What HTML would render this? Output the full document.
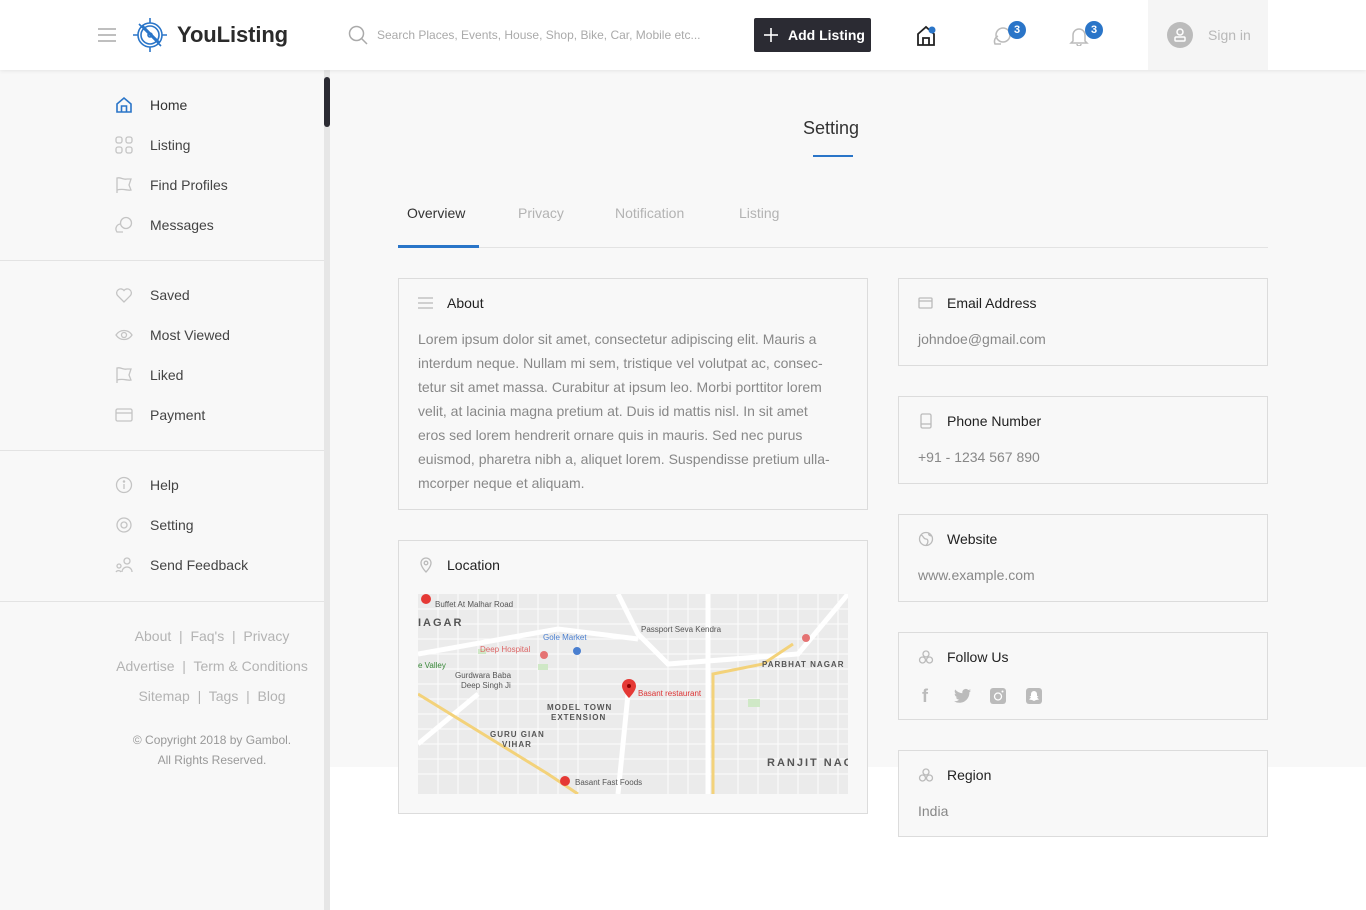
<!DOCTYPE html>
<html><head><meta charset="utf-8">
<style>
*{margin:0;padding:0;box-sizing:border-box}
body{width:1366px;height:910px;position:relative;overflow:hidden;background:#fff;font-family:"Liberation Sans",sans-serif;color:#333}
.a{position:absolute}
#hdr{left:0;top:0;width:1366px;height:70px;background:#fff;box-shadow:0 1px 4px rgba(0,0,0,.08);z-index:5}
#side{left:0;top:70px;width:324px;height:840px;background:#f8f8f8}
#track{left:324px;top:70px;width:6px;height:840px;background:#e6e6e6}
#thumb{left:324px;top:77px;width:6px;height:50px;background:#2b2b33;border-radius:3px}
#main{left:330px;top:70px;width:1036px;height:697px;background:#f8f8f8}
.nav{left:115px;font-size:14px;color:#333;display:flex;align-items:center}
.nav svg{width:18px;height:18px;margin-right:17px}
.sep{left:0;width:324px;height:1px;background:#e3e3e3}
.ft{left:100px;width:224px;text-align:center;font-size:14px;color:#b3b3b3}
.card{border:1px solid #dcdcdc;background:#f8f8f8}
.ct{font-size:14px;color:#222;display:flex;align-items:center}
.ct svg{width:16px;height:16px;margin-right:13px}
.cv{font-size:14px;color:#888}
.tab{top:205px;font-size:14px;color:#b3b3b3}
</style></head><body>
<div id="hdr" class="a">
  <svg class="a" style="left:98px;top:27px" width="18" height="16"><g stroke="#aaa" stroke-width="1.6"><line x1="0" y1="2" x2="18" y2="2"/><line x1="0" y1="8" x2="18" y2="8"/><line x1="0" y1="14" x2="18" y2="14"/></g></svg>
  <svg class="a" style="left:131px;top:16px" width="38" height="38" viewBox="0 0 38 38" fill="none" stroke="#2a75c8" stroke-width="1.6"><circle cx="19" cy="19" r="12"/><circle cx="19" cy="19" r="9"/><path d="M19 2v5M19 31v5M2 19h5M31 19h5"/><path d="M8 8l22 22M12 10l7 7 2 2 7 7-7-5-5-5z"/><circle cx="19" cy="19" r="2"/></svg>
  <div class="a" style="left:177px;top:22px;font-size:22px;font-weight:bold;color:#2b2b2b;letter-spacing:-.1px">YouListing</div>
  <svg class="a" style="left:348px;top:25px" width="20" height="20" fill="none" stroke="#aaa" stroke-width="1.5"><circle cx="8.5" cy="8.5" r="7"/><line x1="13.5" y1="13.5" x2="19" y2="19"/></svg>
  <div class="a" style="left:377px;top:28px;font-size:12px;color:#aaa">Search Places, Events, House, Shop, Bike, Car, Mobile etc...</div>
  <div class="a" style="left:754px;top:18px;width:117px;height:34px;background:#2b2b33;border-radius:2px;color:#fff;font-size:14px;font-weight:bold;line-height:34px;padding-left:34px">Add Listing</div>
  <svg class="a" style="left:763px;top:27px" width="16" height="16" stroke="#fff" stroke-width="1.6"><line x1="8" y1="1" x2="8" y2="15"/><line x1="1" y1="8" x2="15" y2="8"/></svg>
  <svg class="a" style="left:916px;top:25px" width="22" height="22" fill="none" stroke="#222" stroke-width="1.8"><path d="M2 9L10 2l8 7v11H2z"/><path d="M7 20v-7h6v7"/><circle cx="16" cy="5" r="3.5" fill="#2a75c8" stroke="none"/></svg>
  <svg class="a" style="left:992px;top:26px" width="22" height="20" fill="none" stroke="#bbb" stroke-width="1.5"><circle cx="11" cy="9" r="7"/><path d="M6 10a6 6 0 0 0-3 8h6"/></svg>
  <div class="a" style="left:1008px;top:21px;width:18px;height:18px;border-radius:9px;background:#2a75c8;color:#fff;font-size:11px;font-weight:bold;text-align:center;line-height:18px">3</div>
  <svg class="a" style="left:1069px;top:26px" width="20" height="20" fill="none" stroke="#bbb" stroke-width="1.5"><path d="M4 15V9a6 6 0 0 1 12 0v6l2 2H2z"/><path d="M8 18a2 2 0 0 0 4 0"/></svg>
  <div class="a" style="left:1085px;top:21px;width:18px;height:18px;border-radius:9px;background:#2a75c8;color:#fff;font-size:11px;font-weight:bold;text-align:center;line-height:18px">3</div>
  <div class="a" style="left:1148px;top:0;width:120px;height:70px;background:#f5f5f5"></div>
  <div class="a" style="left:1167px;top:22px;width:26px;height:26px;border-radius:13px;background:#bbb"></div>
  <svg class="a" style="left:1172px;top:27px" width="16" height="16" fill="none" stroke="#fff" stroke-width="1.5"><circle cx="8" cy="5" r="3"/><rect x="3" y="10" width="10" height="4" rx="1"/></svg>
  <div class="a" style="left:1208px;top:27px;font-size:14px;color:#b8b8b8">Sign in</div>
</div>

<div id="side" class="a"></div>
<div id="track" class="a"></div>
<div id="thumb" class="a"></div>
<div id="main" class="a"></div>

<div class="a nav" style="top:96px"><svg viewBox="0 0 18 18" fill="none" stroke="#2a75c8" stroke-width="1.6"><path d="M2 8l7-6 7 6v8H2z"/><path d="M6.5 16v-6h5v6"/></svg>Home</div>
<div class="a nav" style="top:136px;color:#444"><svg viewBox="0 0 18 18" fill="none" stroke="#c4c4c4" stroke-width="1.3"><rect x="1" y="1" width="6" height="6" rx="2"/><rect x="11" y="1" width="6" height="6" rx="2"/><rect x="1" y="11" width="6" height="6" rx="2"/><rect x="11" y="11" width="6" height="6" rx="2"/></svg>Listing</div>
<div class="a nav" style="top:176px;color:#444"><svg viewBox="0 0 18 18" fill="none" stroke="#c4c4c4" stroke-width="1.3"><path d="M2 17V2c4-1 6 2 10 1l4 0-2 6 2 5c-4 1-7-2-14 0"/></svg>Find Profiles</div>
<div class="a nav" style="top:216px;color:#444"><svg viewBox="0 0 18 18" fill="none" stroke="#c4c4c4" stroke-width="1.3"><circle cx="11" cy="7" r="5.5"/><path d="M5 8a5 5 0 0 0-3 8h6"/></svg>Messages</div>
<div class="a sep" style="top:260px"></div>
<div class="a nav" style="top:286px;color:#444"><svg viewBox="0 0 18 18" fill="none" stroke="#c4c4c4" stroke-width="1.3"><path d="M9 16L2.5 9.5a4 4 0 0 1 6.5-5 4 4 0 0 1 6.5 5z"/></svg>Saved</div>
<div class="a nav" style="top:326px;color:#444"><svg viewBox="0 0 18 18" fill="none" stroke="#c4c4c4" stroke-width="1.3"><path d="M1 9c4-6 12-6 16 0-4 6-12 6-16 0z"/><circle cx="9" cy="9" r="2.5"/></svg>Most Viewed</div>
<div class="a nav" style="top:366px;color:#444"><svg viewBox="0 0 18 18" fill="none" stroke="#c4c4c4" stroke-width="1.3"><path d="M2 17V2c4-1 6 2 10 1l4 0-2 6 2 5c-4 1-7-2-14 0"/></svg>Liked</div>
<div class="a nav" style="top:406px;color:#444"><svg viewBox="0 0 18 18" fill="none" stroke="#c4c4c4" stroke-width="1.3"><rect x="1" y="3" width="16" height="12" rx="1.5"/><line x1="1" y1="7" x2="17" y2="7"/></svg>Payment</div>
<div class="a sep" style="top:450px"></div>
<div class="a nav" style="top:476px;color:#444"><svg viewBox="0 0 18 18" fill="none" stroke="#c4c4c4" stroke-width="1.3"><circle cx="9" cy="9" r="7.5"/><line x1="9" y1="8" x2="9" y2="13"/><circle cx="9" cy="5.5" r=".6"/></svg>Help</div>
<div class="a nav" style="top:516px;color:#444"><svg viewBox="0 0 18 18" fill="none" stroke="#c4c4c4" stroke-width="1.3"><circle cx="9" cy="9" r="7"/><circle cx="9" cy="9" r="3"/></svg>Setting</div>
<div class="a nav" style="top:556px;color:#444"><svg viewBox="0 0 18 18" fill="none" stroke="#c4c4c4" stroke-width="1.3"><circle cx="12" cy="5" r="3"/><path d="M7 16a5 5 0 0 1 10 0"/><circle cx="4" cy="10" r="2"/><path d="M1 16a3 3 0 0 1 5 0"/></svg>Send Feedback</div>
<div class="a sep" style="top:601px"></div>
<div class="a ft" style="top:628px">About &nbsp;|&nbsp; Faq's &nbsp;|&nbsp; Privacy</div>
<div class="a ft" style="top:658px">Advertise &nbsp;|&nbsp; Term &amp; Conditions</div>
<div class="a ft" style="top:688px">Sitemap &nbsp;|&nbsp; Tags &nbsp;|&nbsp; Blog</div>
<div class="a ft" style="top:733px;font-size:12px;color:#999">© Copyright 2018 by Gambol.</div>
<div class="a ft" style="top:753px;font-size:12px;color:#999">All Rights Reserved.</div>

<div class="a" style="left:803px;top:118px;font-size:18px;color:#333">Setting</div>
<div class="a" style="left:813px;top:155px;width:40px;height:2px;background:#2a75c8"></div>
<div class="a tab" style="left:407px;color:#333">Overview</div>
<div class="a tab" style="left:518px">Privacy</div>
<div class="a tab" style="left:615px">Notification</div>
<div class="a tab" style="left:739px">Listing</div>
<div class="a" style="left:398px;top:247px;width:870px;height:1px;background:#e3e3e3"></div>
<div class="a" style="left:398px;top:245px;width:81px;height:3px;background:#2a75c8"></div>

<div class="a card" style="left:398px;top:278px;width:470px;height:232px"></div>
<div class="a ct" style="left:418px;top:295px"><svg viewBox="0 0 16 16" stroke="#bbb" stroke-width="1.3"><line x1="0" y1="3" x2="15" y2="3"/><line x1="0" y1="8" x2="15" y2="8"/><line x1="0" y1="13" x2="15" y2="13"/></svg>About</div>
<div class="a cv" style="left:418px;top:327px;width:412px;line-height:24px">Lorem ipsum dolor sit amet, consectetur adipiscing elit. Mauris a interdum neque. Nullam mi sem, tristique vel volutpat ac, consec-tetur sit amet massa. Curabitur at ipsum leo. Morbi porttitor lorem velit, at lacinia magna pretium at. Duis id mattis nisl. In sit amet eros sed lorem hendrerit ornare quis in mauris. Sed nec purus euismod, pharetra nibh a, aliquet lorem. Suspendisse pretium ulla-mcorper neque et aliquam.</div>

<div class="a card" style="left:398px;top:540px;width:470px;height:274px"></div>
<div class="a ct" style="left:418px;top:557px"><svg viewBox="0 0 16 16" fill="none" stroke="#bbb" stroke-width="1.3"><path d="M8 15s-5-5-5-9a5 5 0 0 1 10 0c0 4-5 9-5 9z"/><circle cx="8" cy="6" r="1.8"/></svg>Location</div>
<svg class="a" style="left:418px;top:594px" width="430" height="200" viewBox="0 0 430 200">
<rect width="430" height="200" fill="#ebebeb"/>
<g stroke="#fff" stroke-width="1" opacity=".9"><path d="M0 15h430M0 30h430M0 45h430M0 60h430M0 75h430M0 90h430M0 105h430M0 120h430M0 135h430M0 150h430M0 165h430M0 180h430M20 0v200M40 0v200M60 0v200M80 0v200M100 0v200M120 0v200M140 0v200M160 0v200M250 0v200M270 0v200M320 0v200M340 0v200M360 0v200M380 0v200M400 0v200M420 0v200"/></g>
<g stroke="#fff" stroke-width="5" fill="none"><path d="M200 0l20 40 30 30 130 -10 50 -60"/><path d="M0 60l140-25 80 10"/><path d="M210 100l-10 100"/><path d="M290 0v200"/><path d="M60 100l-60 50"/></g>
<g stroke="#f3d27a" stroke-width="3" fill="none"><path d="M295 200V80l50-10 30-20"/><path d="M0 100l130 80 30 20"/></g>
<g fill="#cfe8c6"><rect x="330" y="105" width="12" height="8"/><rect x="60" y="55" width="8" height="5"/><rect x="120" y="70" width="10" height="6"/></g>
<g font-family="Liberation Sans" font-size="8" fill="#555"><text x="17" y="13">Buffet At Malhar Road</text><text x="0" y="32" font-size="11" font-weight="bold" letter-spacing="2">IAGAR</text><text x="125" y="46" fill="#4a7fd0">Gole Market</text><text x="223" y="38">Passport Seva Kendra</text><text x="62" y="58" fill="#d66">Deep Hospital</text><text x="0" y="74" fill="#3a8a3a">e Valley</text><text x="37" y="84">Gurdwara Baba</text><text x="43" y="94">Deep Singh Ji</text><text x="220" y="102" fill="#d33">Basant restaurant</text><text x="344" y="73" font-weight="bold" letter-spacing="1">PARBHAT NAGAR</text><text x="129" y="116" font-weight="bold" letter-spacing="1">MODEL TOWN</text><text x="133" y="126" font-weight="bold" letter-spacing="1">EXTENSION</text><text x="72" y="143" font-weight="bold" letter-spacing="1">GURU GIAN</text><text x="84" y="153" font-weight="bold" letter-spacing="1">VIHAR</text><text x="349" y="172" font-size="11" font-weight="bold" letter-spacing="2">RANJIT NAG</text><text x="157" y="191">Basant Fast Foods</text></g>
<path d="M204 92a7 7 0 0 1 14 0c0 5-7 12-7 12s-7-7-7-12z" fill="#e53935"/><circle cx="211" cy="92" r="2" fill="#8b0000"/>
<circle cx="8" cy="5" r="5" fill="#e53935"/><circle cx="147" cy="187" r="5" fill="#e53935"/><circle cx="126" cy="61" r="4" fill="#e57373"/><circle cx="388" cy="44" r="4" fill="#e57373"/><circle cx="159" cy="57" r="4" fill="#4a7fd0"/>
</svg>

<div class="a card" style="left:898px;top:278px;width:370px;height:88px"></div>
<div class="a ct" style="left:918px;top:295px"><svg viewBox="0 0 16 16" fill="none" stroke="#bbb" stroke-width="1.3"><rect x="1" y="3" width="13" height="10" rx="1"/><path d="M1 6h13"/></svg>Email Address</div>
<div class="a cv" style="left:918px;top:331px">johndoe@gmail.com</div>

<div class="a card" style="left:898px;top:396px;width:370px;height:88px"></div>
<div class="a ct" style="left:918px;top:413px"><svg viewBox="0 0 16 16" fill="none" stroke="#bbb" stroke-width="1.3"><rect x="3" y="1" width="10" height="14" rx="1.5"/><line x1="3" y1="11" x2="13" y2="11"/></svg>Phone Number</div>
<div class="a cv" style="left:918px;top:449px">+91 - 1234 567 890</div>

<div class="a card" style="left:898px;top:514px;width:370px;height:88px"></div>
<div class="a ct" style="left:918px;top:531px"><svg viewBox="0 0 16 16" fill="none" stroke="#bbb" stroke-width="1.3"><circle cx="8" cy="8" r="6.5"/><path d="M3 4c3 1 2 4 5 4s2 5 0 6M11 2c-1 2 1 3 3 3"/></svg>Website</div>
<div class="a cv" style="left:918px;top:567px">www.example.com</div>

<div class="a card" style="left:898px;top:632px;width:370px;height:88px"></div>
<div class="a ct" style="left:918px;top:649px"><svg viewBox="0 0 16 16" fill="none" stroke="#bbb" stroke-width="1.3"><circle cx="8" cy="5" r="3"/><circle cx="4.5" cy="11" r="3"/><circle cx="11.5" cy="11" r="3"/></svg>Follow Us</div>
<div class="a" style="left:922px;top:686px;font-size:18px;font-weight:bold;color:#bbb">f</div>
<svg class="a" style="left:954px;top:688px" width="18" height="16" viewBox="0 0 18 16"><path d="M17 2.5c-.6.3-1.3.5-2 .6.7-.4 1.3-1.1 1.5-1.9-.7.4-1.4.7-2.2.8A3.5 3.5 0 0 0 8.4 5.2 10 10 0 0 1 1.2 1.5 3.5 3.5 0 0 0 2.3 6.2c-.6 0-1.1-.2-1.6-.4 0 1.7 1.2 3.1 2.8 3.4-.5.2-1 .2-1.6.1.4 1.4 1.7 2.4 3.3 2.4A7 7 0 0 1 0 13.2 10 10 0 0 0 5.4 14.8c6.5 0 10-5.4 10-10v-.5c.7-.5 1.200-1.1 1.6-1.8z" fill="#bbb"/></svg>
<svg class="a" style="left:990px;top:688px" width="16" height="16"><rect width="16" height="16" rx="3" fill="#bbb"/><circle cx="8" cy="8.5" r="3.5" fill="none" stroke="#fff" stroke-width="1.3"/><circle cx="12.5" cy="3.5" r="1" fill="#fff"/></svg>
<svg class="a" style="left:1026px;top:688px" width="16" height="16"><rect width="16" height="16" rx="3" fill="#bbb"/><path d="M8 3a3 3 0 0 1 3 3v2l1.5.5-1.5 1 2 2-3 .5-2 1-2-1-3-.5 2-2-1.5-1L5 8V6a3 3 0 0 1 3-3z" fill="#fff"/></svg>

<div class="a card" style="left:898px;top:750px;width:370px;height:87px"></div>
<div class="a ct" style="left:918px;top:767px"><svg viewBox="0 0 16 16" fill="none" stroke="#bbb" stroke-width="1.3"><circle cx="8" cy="5" r="3"/><circle cx="4.5" cy="11" r="3"/><circle cx="11.5" cy="11" r="3"/></svg>Region</div>
<div class="a cv" style="left:918px;top:803px">India</div>
</body></html>
